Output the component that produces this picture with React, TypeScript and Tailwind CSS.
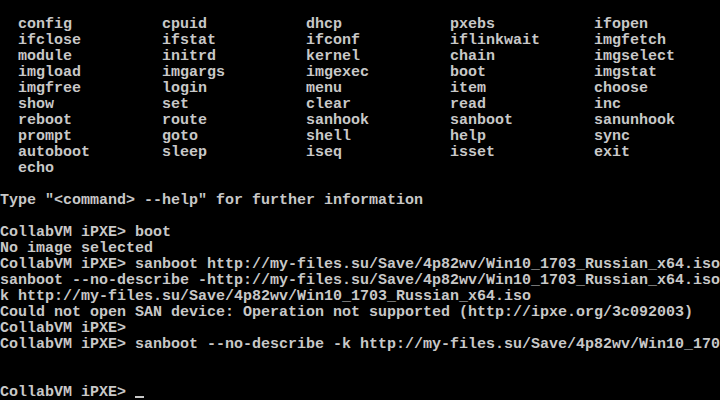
const commands = [
  ["config", "cpuid", "dhcp", "pxebs", "ifopen"],
  ["ifclose", "ifstat", "ifconf", "iflinkwait", "imgfetch"],
  ["module", "initrd", "kernel", "chain", "imgselect"],
  ["imgload", "imgargs", "imgexec", "boot", "imgstat"],
  ["imgfree", "login", "menu", "item", "choose"],
  ["show", "set", "clear", "read", "inc"],
  ["reboot", "route", "sanhook", "sanboot", "sanunhook"],
  ["prompt", "goto", "shell", "help", "sync"],
  ["autoboot", "sleep", "iseq", "isset", "exit"],
  ["echo"],
];

const log = [
  "",
  'Type "<command> --help" for further information',
  "",
  "CollabVM iPXE> boot",
  "No image selected",
  "CollabVM iPXE> sanboot http://my-files.su/Save/4p82wv/Win10_1703_Russian_x64.iso",
  "sanboot --no-describe -http://my-files.su/Save/4p82wv/Win10_1703_Russian_x64.iso",
  "k http://my-files.su/Save/4p82wv/Win10_1703_Russian_x64.iso",
  "Could not open SAN device: Operation not supported (http://ipxe.org/3c092003)",
  "CollabVM iPXE>",
  "CollabVM iPXE> sanboot --no-describe -k http://my-files.su/Save/4p82wv/Win10_170",
  "",
  "",
];

const pad = (s: string, n: number) => s + " ".repeat(Math.max(0, n - s.length));

const Line = ({ text }: { text: string }) => (
  <div className="h-4 overflow-hidden whitespace-pre">{text || " "}</div>
);

export default function App() {
  const rows = commands.map((r) => "  " + r.map((c) => pad(c, 16)).join("").trimEnd());
  return (
    <div className="w-[720px] h-[400px] overflow-hidden bg-black text-[#c8c8c8] font-['Liberation_Mono',monospace] font-bold text-[15px] leading-4 pt-px">
      <Line text="" />
      {rows.map((r, i) => (
        <Line key={"c" + i} text={r} />
      ))}
      {log.map((l, i) => (
        <Line key={"l" + i} text={l} />
      ))}
      <div className="h-4 flex whitespace-pre">
        <span>{"CollabVM iPXE> "}</span>
        <span className="relative w-[9px]">
          <span className="absolute left-0 bottom-[3px] w-[9px] h-[2px] bg-[#c8c8c8]" />
        </span>
      </div>
    </div>
  );
}
